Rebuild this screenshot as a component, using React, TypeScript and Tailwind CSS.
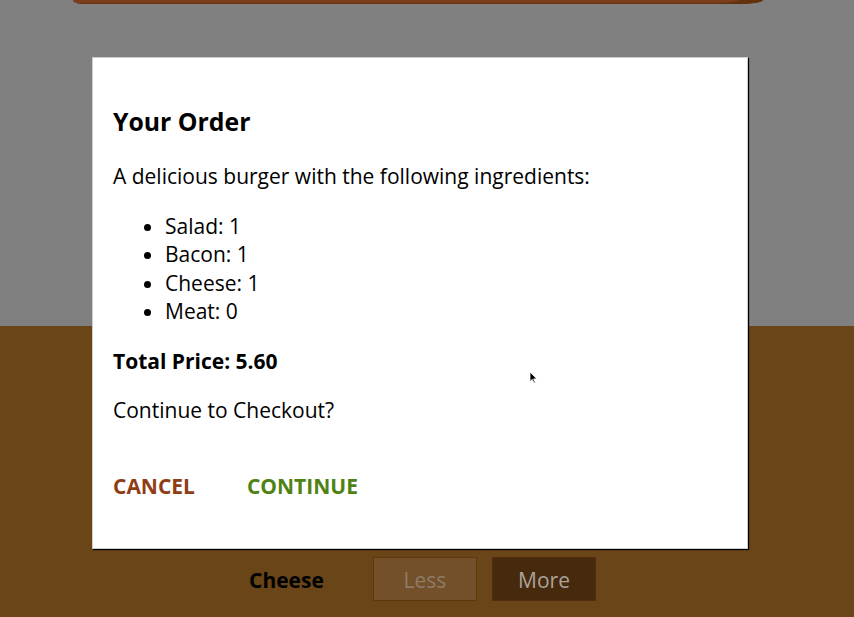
import React from 'react';

const ingredients = [
  { label: 'Salad', amount: 1 },
  { label: 'Bacon', amount: 1 },
  { label: 'Cheese', amount: 1 },
  { label: 'Meat', amount: 0 },
];

function BuildControl({ label }: { label: string }) {
  return (
    <div className="flex items-center h-[44px] pr-[9px] text-[21px] leading-[30px]">
      <div className="w-[124px] pt-[2px] font-bold text-black">{label}</div>
      <button className="w-[104px] h-[44px] pt-[2px] border border-[#5f370c] bg-[#73502a] text-[#8d7b68]">
        Less
      </button>
      <button className="w-[104px] h-[44px] pt-[2px] ml-[15px] border border-[#4f2f10] bg-[#472a0e] text-[#aaa39b]">
        More
      </button>
    </div>
  );
}

function OrderSummary() {
  return (
    <div className="absolute left-[92px] top-[57px] w-[656px] h-[492px] bg-white border border-[#cccccc] shadow-[1px_1px_1px_black] px-[20px] pt-[47px] text-black">
      <h3 className="text-[24.8px] leading-[32px] font-bold">Your Order</h3>
      <p className="mt-[25px] text-[21px] leading-[28.5px]">
        A delicious burger with the following ingredients:
      </p>
      <ul className="mt-[21px] pl-[52px] list-disc text-[21px] leading-[28.5px]">
        {ingredients.map((ing) => (
          <li key={ing.label}>
            {ing.label}: {ing.amount}
          </li>
        ))}
      </ul>
      <p className="mt-[21px] text-[21px] leading-[28.5px] font-bold">Total Price: 5.60</p>
      <p className="mt-[21px] text-[21px] leading-[28.5px]">Continue to Checkout?</p>
      <div className="mt-[47px] flex gap-[52px] text-[21px] leading-[28.5px] font-bold">
        <button className="text-[#8e3d15]">CANCEL</button>
        <button className="text-[#4f8214]">CONTINUE</button>
      </div>
    </div>
  );
}

export default function App() {
  return (
    <div
      className="relative w-[854px] h-[617px] overflow-hidden bg-[#694518]"
      style={{ fontFamily: '"Open Sans", "Liberation Sans", sans-serif' }}
    >
      {/* Burger area (dimmed by backdrop) */}
      <div className="h-[326px] bg-[#808080]">
        <div className="ml-[73px] w-[690px] h-[4px] bg-[#7a3e1c] rounded-bl-[14px_4px] rounded-br-[30px_5px] shadow-[inset_-22px_-1px_0_#64310f]" />
      </div>

      {/* Build controls (dimmed), the rows above sit behind the modal */}
      <div className="flex flex-col items-center pt-[231px]">
        <BuildControl label="Cheese" />
      </div>

      <OrderSummary />

      {/* mouse pointer */}
      <svg className="absolute left-[529px] top-[371px]" width="9" height="13" viewBox="0 0 9 13">
        <path d="M1 1 L1 10.5 L3.3 8.4 L5 12 L6.3 11.4 L4.7 7.9 L7.8 7.9 Z" fill="black" stroke="white" strokeWidth="0.8" />
      </svg>
    </div>
  );
}
